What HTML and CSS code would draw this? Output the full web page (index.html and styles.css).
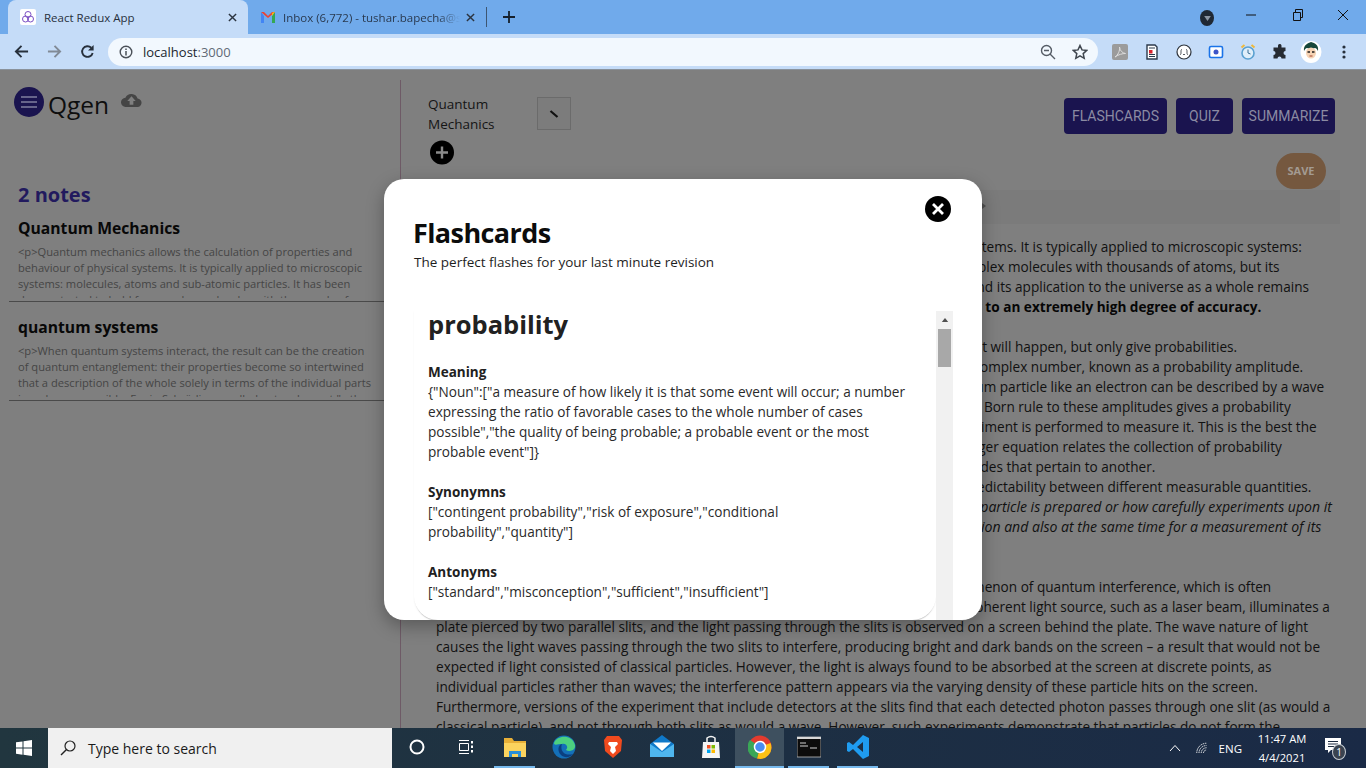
FILE: index.html
```html
<!DOCTYPE html>
<html lang="en">
<head>
<meta charset="utf-8">
<title>React Redux App</title>
<link rel="stylesheet" href="styles.css">
</head>
<body>
<div class="tabstrip">
  <div class="tab active">
    <svg class="fav" viewBox="0 0 16 16"><rect width="16" height="16" rx="2" fill="#fff"/><g fill="none" stroke="#7b4fc4" stroke-width="1"><circle cx="8" cy="5.500" r="3"/><circle cx="5.500" cy="10" r="3"/><circle cx="10.500" cy="10" r="3"/></g></svg>
    <span class="tab-title">React Redux App</span>
    <svg class="tab-x" viewBox="0 0 10 10"><path d="M1 1l8 8M9 1l-8 8" stroke="#2b3440" stroke-width="1.600"/></svg>
  </div>
  <div class="tab inactive">
    <svg class="fav" viewBox="0 0 16 16"><path d="M1 3v11h3V7z" fill="#4285f4"/><path d="M12 14h3V3l-3 4z" fill="#34a853"/><path d="M1 3l3 0 4 4 4-4h3l-7 6z" fill="#ea4335"/><path d="M15 2.500l-3 4.500v-3z" fill="#fbbc04"/></svg>
    <span class="tab-title fade">Inbox (6,772) - tushar.bapecha@s</span>
    <svg class="tab-x" viewBox="0 0 10 10"><path d="M1 1l8 8M9 1l-8 8" stroke="#2b3440" stroke-width="1.600"/></svg>
  </div>
  <span class="tab-sep"></span>
  <svg class="new-tab" viewBox="0 0 12 12"><path d="M6 0v12M0 6h12" stroke="#16202c" stroke-width="1.800"/></svg>
  <div class="win-controls">
    <span class="media-dot"><svg viewBox="0 0 8 6"><path d="M0 0h8L4 6z" fill="#8b95a3"/></svg></span>
    <svg class="win-btn" viewBox="0 0 46 30"><path d="M18 15h10" stroke="#111" stroke-width="1"/></svg>
    <svg class="win-btn" viewBox="0 0 46 30"><path d="M19.500 12.500h7v8h-7zM21.500 12v-2.500h7v8H27" fill="none" stroke="#111"/></svg>
    <svg class="win-btn" viewBox="0 0 46 30"><path d="M18 10l10 10M28 10L18 20" stroke="#111"/></svg>
  </div>
</div>
<div class="toolbar">
  <svg class="nav" viewBox="0 0 16 16"><path d="M15 8H2M8 2L2 8l6 6" fill="none" stroke="#27303c" stroke-width="2"/></svg>
  <svg class="nav" viewBox="0 0 16 16"><path d="M1 8h13M8 2l6 6-6 6" fill="none" stroke="#818a96" stroke-width="2"/></svg>
  <svg class="nav" viewBox="0 0 16 16"><path d="M13.500 9.500A5.700 5.700 0 1 1 12 4" fill="none" stroke="#27303c" stroke-width="2"/><path d="M14.500 1v6h-6z" fill="#27303c"/></svg>
  <div class="omnibox">
    <svg class="info" viewBox="0 0 14 14"><circle cx="7" cy="7" r="5.800" fill="none" stroke="#4a5058" stroke-width="1.400"/><path d="M7 6v4.500M7 3.500v1.500" stroke="#4a5058" stroke-width="1.500"/></svg>
    <span class="url">localhost<span class="url-port">:3000</span></span>
    <svg class="omni-ic zoom-ic" viewBox="0 0 16 16"><circle cx="6.500" cy="6.500" r="5" fill="none" stroke="#555c66" stroke-width="1.400"/><path d="M10 10l5 5M4 6.500h5" stroke="#555c66" stroke-width="1.400"/></svg>
    <svg class="omni-ic" viewBox="0 0 16 16"><path d="M8 1.500l2 4.400 4.800.5-3.600 3.200 1 4.700L8 11.900l-4.200 2.400 1-4.700L1.200 6.400 6 5.900z" fill="none" stroke="#3f464f" stroke-width="1.500"/></svg>
  </div>
  <div class="extensions">
    <span class="ext ext-pdf"><svg viewBox="0 0 16 16"><path d="M3 13c3-2 5-6 4.500-10 .5 4 3 6 6 6.500-3 0-7 1-10.500 3.500z" fill="none" stroke="#ddd" stroke-width="1"/></svg></span>
    <svg class="ext" viewBox="0 0 16 16"><path d="M3 1h8l2 2v12H3z" fill="#fff" stroke="#2c3a4c" stroke-width="1.400"/><path d="M5 4h6M5 12.500h6M5 10.500h6" stroke="#2c3a4c"/><rect x="5" y="6" width="3.500" height="3.500" fill="#d9232d"/></svg>
    <svg class="ext" viewBox="0 0 16 16"><circle cx="8" cy="8" r="7" fill="#fff" stroke="#2d333b" stroke-width="1.200"/><path d="M6 5.500C5 5.500 5 6 5 8s0 2.500-1 2.500M10 5.500c1 0 1 .5 1 2.500s0 2.500 1 2.500M7 10.500h2" fill="none" stroke="#2d333b" stroke-width=".8"/></svg>
    <svg class="ext" viewBox="0 0 16 16"><rect x="1.500" y="2.500" width="13" height="11" rx="1.500" fill="#fff" stroke="#1a73e8" stroke-width="1.600"/><circle cx="8" cy="8" r="2.500" fill="#3d55c8"/></svg>
    <svg class="ext" viewBox="0 0 16 16"><circle cx="8" cy="9" r="6" fill="#dfeefa" stroke="#5aa0d0" stroke-width="1.600"/><path d="M1.500 3.500l3-2.500M14.500 3.500l-3-2.500" stroke="#f0b93a" stroke-width="2"/><path d="M8 5.500V9l2.500 1" fill="none" stroke="#3a6f96" stroke-width="1"/></svg>
    <svg class="ext" viewBox="0 0 16 16"><path d="M6 1.500a1.800 1.800 0 0 1 3.500 0V3.500h4v3.500a2 2 0 1 0 0 4v3.500h-4a2 2 0 1 0-4 0h-4V11a2 2 0 1 0 0-4V3.500H6z" fill="#262b33"/></svg>
    <svg class="avatar" viewBox="0 0 22 22"><ellipse cx="11" cy="11" rx="10.500" ry="11" fill="#fff"/><path d="M4 10C3 4 8 2 11 1c4 1 8 3 7 9-1-2-2-3-3-3-2 1-6 1-8 0-1 0-2 1-3 3z" fill="#16463a"/><ellipse cx="11" cy="12" rx="5" ry="5.500" fill="#f6d3b4"/><path d="M7.500 11h2.500M12 11h2.500" stroke="#1b1b1b" stroke-width="1.500"/><path d="M9.500 15h3" stroke="#a04030"/></svg>
    <svg class="ext menu-dots" viewBox="0 0 4 16"><circle cx="2" cy="3" r="1.600" fill="#27303c"/><circle cx="2" cy="8" r="1.600" fill="#27303c"/><circle cx="2" cy="13" r="1.600" fill="#27303c"/></svg>
  </div>
</div>
<main class="page">
  <aside class="sidebar">
    <div class="brand">
      <span class="menu-btn"><svg viewBox="0 0 16 12"><path d="M0 1h16M0 6h16M0 11h16" stroke="#807fa0" stroke-width="1.600"/></svg></span>
      <span class="brand-name">Qgen</span>
      <svg class="cloud" viewBox="0 0 22 15"><path d="M17.500 6A7 7 0 0 0 4.500 5 5 5 0 0 0 5 15h12a4.500 4.500 0 0 0 .5-9z" fill="#454545"/><path d="M11 3.500L15.500 8.500H13V12.500H9V8.500H6.500z" fill="#7f7f7f"/></svg>
    </div>
    <h2 class="notes-count">2 notes</h2>
    <article class="note">
      <h3 class="note-title">Quantum Mechanics</h3>
      <p class="note-body">&lt;p&gt;Quantum mechanics allows the calculation of properties and behaviour of physical systems. It is typically applied to microscopic systems: molecules, atoms and sub-atomic particles. It has been demonstrated to hold for complex molecules with thousands of atoms</p>
    </article>
    <article class="note">
      <h3 class="note-title">quantum systems</h3>
      <p class="note-body">&lt;p&gt;When quantum systems interact, the result can be the creation of quantum entanglement: their properties become so intertwined that a description of the whole solely in terms of the individual parts is no longer possible. Erwin Schrödinger called entanglement "...the</p>
    </article>
  </aside>
  <section class="content">
    <div class="content-top">
      <div class="note-head">
        <div class="note-name-row">
          <span class="note-name">Quantum Mechanics</span>
          <span class="pencil"><svg viewBox="0 0 10 10"><path d="M1.500 2l7 6" stroke="#111" stroke-width="2.200"/></svg></span>
        </div>
        <svg class="plus" viewBox="0 0 24 24"><circle cx="12" cy="12" r="12" fill="#000"/><path d="M12 6v12M6 12h12" stroke="#8a8a8a" stroke-width="2.400"/></svg>
      </div>
      <div class="actions">
        <span class="btn btn-flash">FLASHCARDS</span>
        <span class="btn btn-quiz">QUIZ</span>
        <span class="btn btn-sum">SUMMARIZE</span>
      </div>
    </div>
    <div class="save-row"><span class="save">SAVE</span></div>
    <div class="editor-bar"><svg class="bar-mark" viewBox="0 0 4 6"><path d="M0 0l4 3-4 3z" fill="#505050"/></svg></div>
    <div class="article">
      <p>Quantum mechanics allows the calculation of properties and behaviour of physical systems. It is typically applied to microscopic systems: molecules, atoms and sub-atomic particles. It has been demonstrated to hold for complex molecules with thousands of atoms, but its application to human beings raises philosophical problems, such as Wigner's friend, and its application to the universe as a whole remains speculative[1][2] Predictions of quantum mechanics have been verified experimentally <strong>to an extremely high degree of accuracy.</strong></p>
      <p>A fundamental feature of the theory is that it usually cannot predict with certainty what will happen, but only give probabilities. Mathematically, a probability is found by taking the square of the absolute value of a complex number, known as a probability amplitude. This is known as the Born rule, named after physicist Max Born. For example, a quantum particle like an electron can be described by a wave function, which associates to each point in space a probability amplitude. Applying the Born rule to these amplitudes gives a probability density function for the position that the electron will be found to have when an experiment is performed to measure it. This is the best the theory can do; it cannot say for certain where the electron will be found. The Schrödinger equation relates the collection of probability amplitudes that pertain to one moment of time to the collection of probability amplitudes that pertain to another.<br>One consequence of the mathematical rules of quantum mechanics is a tradeoff in predictability between different measurable quantities. <em>The most famous form of this uncertainty principle says that no matter how a quantum particle is prepared or how carefully experiments upon it are arranged, it is impossible to have a precise prediction for a measurement of its position and also at the same time for a measurement of its momentum.</em></p>
      <p>Another consequence of the mathematical rules of quantum mechanics is the phenomenon of quantum interference, which is often illustrated with the double-slit experiment. In the basic version of this experiment, a coherent light source, such as a laser beam, illuminates a plate pierced by two parallel slits, and the light passing through the slits is observed on a screen behind the plate. The wave nature of light causes the light waves passing through the two slits to interfere, producing bright and dark bands on the screen – a result that would not be expected if light consisted of classical particles. However, the light is always found to be absorbed at the screen at discrete points, as individual particles rather than waves; the interference pattern appears via the varying density of these particle hits on the screen. Furthermore, versions of the experiment that include detectors at the slits find that each detected photon passes through one slit (as would a classical particle), and not through both slits as would a wave. However, such experiments demonstrate that particles do not form the interference pattern if one detects which slit they pass through.</p>
    </div>
  </section>
  <div class="modal">
    <svg class="modal-close" viewBox="0 0 26 26"><circle cx="13" cy="13" r="13" fill="#000"/><path d="M8 8l10 10M18 8L8 18" stroke="#fff" stroke-width="2.800"/></svg>
    <h1 class="modal-title">Flashcards</h1>
    <p class="modal-sub">The perfect flashes for your last minute revision</p>
    <div class="flash-wrap">
      <div class="flash-card">
        <h2 class="flash-word">probability</h2>
        <h4 class="flash-label">Meaning</h4>
        <p class="flash-text">{"Noun":["a measure of how likely it is that some event will occur; a number expressing the ratio of favorable cases to the whole number of cases possible","the quality of being probable; a probable event or the most probable event"]}</p>
        <h4 class="flash-label">Synonymns</h4>
        <p class="flash-text">["contingent probability","risk of exposure","conditional probability","quantity"]</p>
        <h4 class="flash-label">Antonyms</h4>
        <p class="flash-text">["standard","misconception","sufficient","insufficient"]</p>
      </div>
      <div class="scrollbar">
        <svg class="scroll-arrow" viewBox="0 0 8 5"><path d="M0 5l4-5 4 5z" fill="#505050"/></svg>
        <span class="scroll-thumb"></span>
      </div>
    </div>
  </div>
</main>
<footer class="taskbar">
  <svg class="start" viewBox="0 0 16 16"><path d="M0 2.300l6.500-.9v6.200H0zM7.500 1.300L16 0v7.600H7.500zM0 8.500h6.500v6.200L0 13.700zM7.500 8.500H16V16l-8.500-1.200z" fill="#fff"/></svg>
  <div class="search">
    <svg class="search-ic" viewBox="0 0 16 16"><circle cx="10" cy="6" r="5" fill="none" stroke="#222" stroke-width="1.200"/><path d="M6.500 9.500L1 15" stroke="#222" stroke-width="1.400"/></svg>
    <span class="search-text">Type here to search</span>
  </div>
  <div class="tb-icons">
    <span class="tb"><svg viewBox="0 0 16 16" class="i16"><circle cx="8" cy="8" r="6.500" fill="none" stroke="#fff" stroke-width="2"/></svg></span>
    <span class="tb"><svg viewBox="0 0 16 16" class="i16"><path d="M1.500 4.500h9v7h-9z M1 1.500h10M1 14.500h10" fill="none" stroke="#fff" stroke-width="1"/><path d="M13 2h2v2.500h-2zM13 6.500h2V9h-2zM13 11h2v2.500h-2z" fill="#fff"/></svg></span>
    <span class="tb open"><svg viewBox="0 0 24 24" class="i24"><path d="M1 3h8l2 3h12v4H1z" fill="#e8b038"/><path d="M1 8h22v14H1z" fill="#fbd35e"/><path d="M6 16h12v6h-3v-3H9v3H6z" fill="#2a8fd8"/></svg></span>
    <span class="tb"><svg viewBox="0 0 24 24" class="i24"><circle cx="12" cy="12" r="11.500" fill="#1470b8"/><path d="M2 8C5 0 20-1 23 10c1 6-6 7-9 5 3-3 0-7-4-6-4 0-8 2-8-1z" fill="#4cd080"/><path d="M10 9C6 10 5 16 9 20c3 3 9 3 12-1-3 1-8 1-10-2-2-2-2-6-1-8z" fill="#0b3f80"/></svg></span>
    <span class="tb"><svg viewBox="0 0 24 24" class="i24"><path d="M6 1h12l3 4-1 11-8 7-8-7L3 5z" fill="#f04a1e"/><path d="M8 7h8l1 2-3 3 1 4-3 3-3-3 1-4-3-3z" fill="#fff"/></svg></span>
    <span class="tb"><svg viewBox="0 0 24 24" class="i24"><path d="M0 9L12 0l12 9v13H0z" fill="#0f78c8"/><path d="M0 9l12 8 12-8v13H0z" fill="#4fb6ee"/><path d="M3 7.500h18l-9 8.500z" fill="#fff"/></svg></span>
    <span class="tb"><svg viewBox="0 0 24 24" class="i24"><path d="M4 7h16l1 16H3z" fill="#f5f5f5"/><path d="M8 7V3q4-3 8 0v4" fill="none" stroke="#f5f5f5" stroke-width="1.500"/><path d="M8 10h3.500v3.500H8z" fill="#f25022"/><path d="M12.500 10H16v3.500h-3.500z" fill="#7fba00"/><path d="M8 14.500h3.500V18H8z" fill="#00a4ef"/><path d="M12.500 14.500H16V18h-3.500z" fill="#ffb900"/></svg></span>
    <span class="tb open current"><svg viewBox="0 0 24 24" class="i24"><circle cx="12" cy="12" r="11.500" fill="#e33b2e"/><path d="M12 12L22.500 8A11.500 11.500 0 0 1 9 23.500z" fill="#fbc116"/><path d="M12 12L9 23.500A11.500 11.500 0 0 1 2 5z" fill="#3aa757"/><circle cx="12" cy="12" r="5.500" fill="#4a8df0" stroke="#fff" stroke-width="1.500"/></svg></span>
    <span class="tb open"><svg viewBox="0 0 24 24" class="i24"><rect y="2" width="24" height="20" fill="#0c0c0c" stroke="#bcbcbc" stroke-width=".8"/><path d="M0 2h24v2H0z" fill="#d8d8d8"/><path d="M3 8h6M3 11h8M13 13h7" stroke="#d0d0d0" stroke-width="1.200"/></svg></span>
    <span class="tb open"><svg viewBox="0 0 24 24" class="i24"><path d="M17 0l6 3v18l-6 3L7 14l-4 3-2-1V8l2-1 4 3zM17 7l-6 5 6 5z" fill="#1f9cf0"/></svg></span>
  </div>
  <div class="tray">
    <svg class="tray-ic" viewBox="0 0 12 8"><path d="M1 7l5-5.500L11 7" fill="none" stroke="#fff" stroke-width="1"/></svg>
    <svg class="tray-wifi" viewBox="0 0 16 16"><path d="M1 14A13 13 0 0 1 14 1M4 14A10 10 0 0 1 14 4M7 14a7 7 0 0 1 7-7M10 14a4 4 0 0 1 4-4" fill="none" stroke="#fff" stroke-width="1.200" stroke-dasharray="2 1"/></svg>
    <span class="lang">ENG</span>
    <span class="clock"><span>11:47 AM</span><span>4/4/2021</span></span>
    <span class="notif">
      <svg viewBox="0 0 16 16"><path d="M0 0h16v12H6l-3 3v-3H0z" fill="#fff"/><path d="M3 3.500h10M3 6h10M3 8.500h10" stroke="#1c2b40"/></svg>
      <span class="notif-badge">1</span>
    </span>
  </div>
</footer>
</body>
</html>
```
FILE: styles.css
```css
* { box-sizing: border-box; }
html, body { margin: 0; height: 100%; }
body {
  width: 1366px;
  height: 768px;
  display: flex;
  flex-direction: column;
  overflow: hidden;
  font-family: "Open Sans", "Liberation Sans", sans-serif;
  background: #7f7f7f;
}
h1, h2, h3, h4, p { margin: 0; }

/* browser chrome */
.tabstrip {
  height: 34px;
  flex: none;
  background: #70aaeb;
  display: flex;
  align-items: flex-end;
  padding-left: 8px;
}
.tab {
  height: 34px;
  display: flex;
  align-items: center;
  font-size: 11.500px;
  color: #27303c;
  padding: 0 8px 0 12px;
  flex: none;
}
.tab.active {
  width: 240px;
  background: #c5dcf8;
  border-radius: 8px 8px 0 0;
}
.tab.inactive { width: 240px; padding-right: 13px; }
.fav { width: 16px; height: 16px; flex: none; margin-right: 8px; }
.tab.inactive .fav { margin-right: 7px; }
.tab-title { flex: 1; white-space: nowrap; overflow: hidden; min-width: 0; }
.tab-title.fade {
  color: #29394e;
  -webkit-mask-image: linear-gradient(90deg, #000 88%, transparent);
  mask-image: linear-gradient(90deg, #000 88%, transparent);
}
.tab-x { width: 9px; height: 9px; flex: none; margin-left: 6px; margin-right: 3px; }
.tab.inactive .tab-x { margin-right: 0; }
.tab-sep { width: 1px; height: 20px; background: #3d5672; margin-bottom: 7px; margin-left: -2px; flex: none; }
.new-tab { width: 12px; height: 12px; margin: 0 0 11px 16px; flex: none; }
.win-controls { margin-left: auto; display: flex; align-items: center; height: 34px; align-self: flex-start; }
.media-dot {
  width: 14px; height: 16px; border-radius: 50%;
  background: #1f2834;
  display: flex; align-items: center; justify-content: center;
  margin: 2px 14px 0 0;
}
.media-dot svg { width: 7px; height: 5px; }
.win-btn { width: 46px; height: 30px; margin-top: -5px; }

.toolbar {
  height: 36px;
  flex: none;
  background: #c5dcf8;
  border-bottom: 1px solid #8a929b;
  display: flex;
  align-items: center;
  padding-left: 14px;
}
.nav { width: 15px; height: 15px; margin-right: 18px; flex: none; }
.nav:nth-child(3) { margin-right: 0; }
.omnibox {
  margin-left: 13px;
  width: 990px;
  height: 28px;
  margin-top: 1px;
  background: #f2f8fe;
  border-radius: 14px;
  display: flex;
  align-items: center;
  padding: 0 10px 0 11px;
}
.info { width: 14px; height: 14px; margin-right: 10px; }
.url { font-size: 13px; color: #20262e; flex: 1; }
.url-port { color: #606a76; }
.omni-ic { width: 16px; height: 16px; flex: none; }
.zoom-ic { margin-right: 16px; }
.extensions { display: flex; align-items: center; margin-left: 14px; }
.ext { width: 16px; height: 16px; margin-right: 16px; flex: none; }
.ext-pdf { display: block; background: #9b9b9b; border-radius: 2px; }
.ext-pdf svg { display: block; width: 16px; height: 16px; }
.avatar { width: 22px; height: 22px; flex: none; margin: 0 20px 0 -4px; }
.menu-dots { width: 4px; margin: 0; }

/* page */
.page {
  position: relative;
  height: 658px;
  flex: none;
  display: flex;
  overflow: hidden;
  background: #7f7f7f;
}
.sidebar { width: 400px; flex: none; padding: 17px 16px 0 9px; }
.brand { display: flex; align-items: flex-start; padding-left: 5px; height: 60px; }
.menu-btn {
  width: 30px; height: 30px; border-radius: 50%;
  background: #1a144f;
  display: flex; align-items: center; justify-content: center;
  flex: none;
}
.menu-btn svg { width: 16px; height: 12px; }
.brand-name { font-size: 24.500px; line-height: 36px; color: #0e0e0e; margin-left: 4px; }
.cloud { width: 21px; height: 14px; margin: 6px 0 0 12px; flex: none; }
.notes-count { font-size: 20px; line-height: 28px; font-weight: 700; color: #221a5e; padding-left: 9px; margin-top: 34px; }
.note { border-bottom: 1px solid #4a4a4a; padding: 0 9px; height: 99px; }
.notes-count + .note { margin-top: 7px; height: 86px; }
.note-title { font-size: 15.700px; line-height: 24px; font-weight: 700; color: #080808; }
.note-body {
  font-size: 11.150px; line-height: 16px; color: #454545;
  height: 54px; overflow: hidden; margin-top: 4px;
}
.note + .note { padding-top: 13px; }

.content { flex: 1; position: relative; border-left: 1px solid #6e5a66; margin-top: 10px; padding: 0 31px 0 35px; min-width: 0; }
.content-top { display: flex; justify-content: space-between; padding-top: 14px; height: 73px; }
.note-head { width: 160px; margin-left: -8px; }
.note-name-row { display: flex; align-items: flex-start; }
.note-name { font-size: 13.500px; line-height: 20px; color: #151515; width: 109px; }
.pencil {
  width: 34px; height: 33px; border: 1px solid #6b6b6b; background: #7c7c7c;
  display: flex; align-items: center; justify-content: center; margin-top: 3px; flex: none;
}
.pencil svg { width: 10px; height: 10px; }
.plus { display: block; width: 24px; height: 25px; margin: 6px 0 0 2px; }
.actions { display: flex; gap: 9px; align-items: flex-start; margin-top: 4px; }
.btn {
  height: 36px; padding: 0 7px; border-radius: 4px;
  background: #1a144f; color: #8b8ba3;
  font: 400 14px/36px Roboto, sans-serif;
  text-align: center;
}
.btn-flash { width: 103px; padding: 0; }
.btn-quiz { width: 57px; padding: 0; }
.btn-sum { width: 93px; padding: 0; }
.save-row { display: flex; justify-content: flex-end; height: 36px; padding-right: 9px; }
.save { width: 50px; height: 36px; border-radius: 18px; background: #75583f; color: #a39b92; font-size: 11px; font-weight: 700; line-height: 36px; text-align: center; }
.editor-bar { height: 34px; background: #7b7b7b; margin-top: 1px; margin-right: -5px; padding: 13px 0 0 546px; }
.bar-mark { display: block; width: 4px; height: 6px; }
.article { font-size: 13.600px; line-height: 20px; color: #111; padding-top: 13px; padding-right: 3px; }
.article p + p { margin-top: 20px; }
.article strong { color: #060606; }
.article em { font-size: 14.050px; }

/* modal */
.modal {
  position: absolute;
  left: 384px;
  top: 109px;
  width: 598px;
  height: 441px;
  background: #fff;
  border-radius: 20px;
  padding: 36px 29px 0 30px;
  box-shadow: 0 6px 18px rgba(0,0,0,.3);
  overflow: hidden;
}
.modal-close { position: absolute; top: 17px; right: 31px; width: 26px; height: 26px; }
.modal-title { font-size: 27px; line-height: 36px; font-weight: 700; color: #0c0c0c; letter-spacing: -.6px; margin-left: -1px; }
.modal-sub { font-size: 13.500px; line-height: 18px; color: #1e1e1e; margin-top: 2px; }
.flash-wrap { display: flex; margin-top: 40px; height: 309px; }
.flash-card {
  width: 522px;
  height: 309px;
  padding: 0 14px;
  border-radius: 0 0 24px 24px;
  box-shadow: 0 2px 1px -1px rgba(0,0,0,.2), 0 1px 2px rgba(0,0,0,.06);
  overflow: hidden;
}
.flash-word { font-size: 25.500px; line-height: 28px; font-weight: 700; color: #212121; margin: -1px 0 24px; }
.flash-label { font-size: 13.500px; line-height: 20px; font-weight: 700; color: #212121; }
.flash-text { font-size: 13.600px; line-height: 20px; color: #2a2a2a; margin-bottom: 20px; }
.scrollbar { width: 17px; height: 309px; background: #f1f1f1; position: relative; flex: none; padding: 7px 2px 0; display: flex; flex-direction: column; align-items: center; }
.scroll-arrow { width: 8px; height: 4px; flex: none; }
.scroll-thumb { width: 13px; height: 38px; background: #a8a8a8; margin-top: 7px; flex: none; }

/* taskbar */
.taskbar {
  height: 40px;
  flex: none;
  display: flex;
  align-items: center;
  background: linear-gradient(90deg, #21363f, #1a2a46);
  color: #fff;
  position: relative;
}
.start { width: 16px; height: 16px; margin: 0 16px 0 16px; flex: none; }
.search {
  width: 344px; height: 40px; background: #f0f0f0;
  display: flex; align-items: center; padding-left: 12px;
  flex: none;
}
.search-ic { width: 16px; height: 16px; margin-right: 12px; }
.search-text { font-size: 14px; color: #1a1a1a; }
.tb-icons { display: flex; height: 40px; }
.tb { width: 49px; height: 40px; display: flex; align-items: center; justify-content: center; position: relative; padding-bottom: 2px; }
.i16 { width: 16px; height: 16px; }
.i24 { width: 24px; height: 24px; }
.tb.open::after { content: ""; position: absolute; left: 4px; right: 4px; bottom: 0; height: 2px; background: #76b9ed; }
.tb.current::after { left: 0; right: 0; }
.tb.current { background: #3e505f; }
.tray { margin-left: auto; display: flex; align-items: center; height: 40px; font-size: 12px; padding-right: 16px; }
.tray-ic { width: 12px; height: 8px; margin-right: 15px; }
.tray-wifi { width: 12px; height: 13px; margin-right: 11px; }
.lang { margin-right: 15px; font-size: 11.500px; }
.clock { display: flex; flex-direction: column; align-items: center; font-size: 11.200px; line-height: 19px; width: 50px; margin-right: 18px; }
.notif { position: relative; width: 25px; height: 24px; }
.notif svg { position: absolute; left: 0; top: 2px; width: 16px; height: 16px; }
.notif-badge {
  position: absolute; left: 7px; top: 8px; width: 14px; height: 16px; border-radius: 50%;
  background: #3a4350; border: 1px solid #c9ced4; color: #fff; font-size: 10px; line-height: 14px; text-align: center;
}
```
